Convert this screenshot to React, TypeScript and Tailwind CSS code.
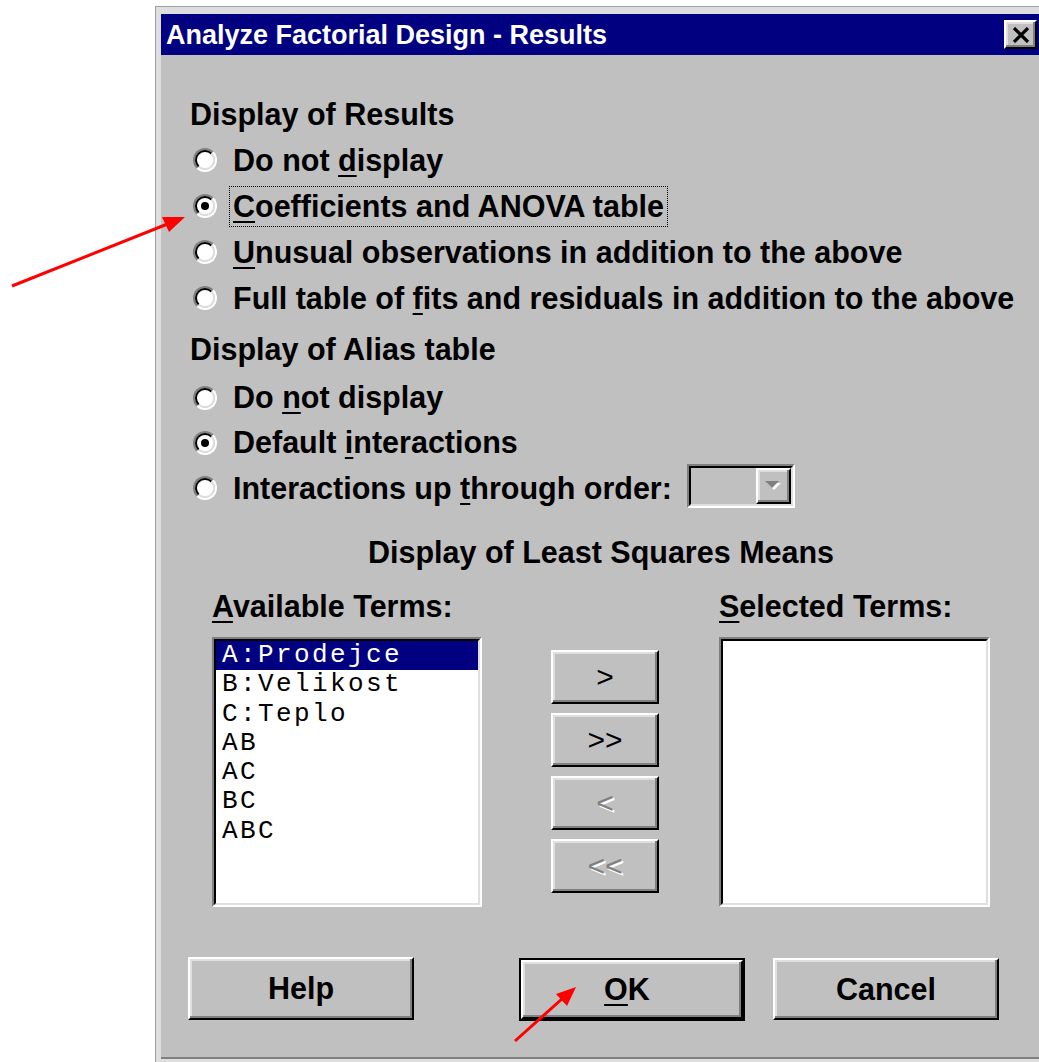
import React from 'react';

// Win95-style "Analyze Factorial Design - Results" dialog

const raised =
  'border-2 border-t-white border-l-white border-r-black border-b-black shadow-[inset_-2px_-2px_0_#808080,inset_2px_2px_0_#dfdfdf]';
const sunken =
  'border-2 border-t-[#808080] border-l-[#808080] border-r-white border-b-white';

const Key: React.FC<{ children: React.ReactNode }> = ({ children }) => (
  <span className="underline decoration-2 underline-offset-[4px]">{children}</span>
);

const Radio: React.FC<{ checked?: boolean }> = ({ checked }) => (
  <span className="flex w-[24px] h-[24px] shrink-0 rounded-full border-2 border-t-[#808080] border-l-[#808080] border-r-white border-b-white">
    <span className="flex w-full h-full items-center justify-center rounded-full border-2 border-t-black border-l-black border-r-[#dfdfdf] border-b-[#dfdfdf] bg-white">
      {checked && <span className="w-[8px] h-[8px] rounded-full bg-black" />}
    </span>
  </span>
);

const RadioRow: React.FC<{ checked?: boolean; focused?: boolean; h: string; children: React.ReactNode }> = ({
  checked,
  focused,
  h,
  children,
}) => (
  <div className={`flex items-center ${h}`}>
    <span className="ml-[3px]">
      <Radio checked={checked} />
    </span>
    {focused ? (
      <span className="ml-[12px] h-[41px] flex items-center border border-dotted border-black px-[3px]">{children}</span>
    ) : (
      <span className="ml-[16px]">{children}</span>
    )}
  </div>
);

const ArrowButton: React.FC<{ label: string; disabled?: boolean }> = ({ label, disabled }) => (
  <div
    className={`${raised} h-[54px] flex items-center justify-center font-normal text-[30px] ${
      disabled ? 'text-[#808080] [text-shadow:2px_2px_0_#ffffff]' : 'text-black'
    }`}
  >
    {label}
  </div>
);

const terms = ['A:Prodejce', 'B:Velikost', 'C:Teplo', 'AB', 'AC', 'BC', 'ABC'];

export default function App() {
  return (
    <div className="relative w-[1039px] h-[1062px] overflow-hidden bg-white font-['Liberation_Sans',Arial,sans-serif] font-bold text-black">
      <div className="ml-[155px] mt-[6px] w-[900px] h-[1056px] border-t border-l border-[#a0a0a0] bg-[#dedede] pl-[5px] pt-[7px]">
        {/* title bar */}
        <div className="w-[883px] h-[41px] bg-[#000080] flex items-center justify-between pl-[5px] pr-[7px]">
          <span className="text-white text-[27px] leading-none mt-[2px]">Analyze Factorial Design - Results</span>
          <div className={`${raised} w-[33px] h-[29px] bg-[#c0c0c0] flex items-center justify-center`}>
            <svg width="18" height="16" viewBox="0 0 18 16">
              <path d="M2 1 L16 15 M16 1 L2 15" stroke="#000" strokeWidth="3.2" />
            </svg>
          </div>
        </div>

        {/* body */}
        <div className="w-[883px] h-[1004px] bg-[#c0c0c0] pl-[29px] pt-[36px] text-[30.5px] leading-none border-b-2 border-[#808080]">
          <div className="h-[46px] flex items-center">Display of Results</div>
          <RadioRow h="h-[46px]">
            Do not <Key>d</Key>isplay
          </RadioRow>
          <RadioRow h="h-[46px]" checked focused>
            <Key>C</Key>oefficients and ANOVA table
          </RadioRow>
          <RadioRow h="h-[46px]">
            <Key>U</Key>nusual observations in addition to the above
          </RadioRow>
          <RadioRow h="h-[46px]">
            Full table of <Key>f</Key>its and residuals in addition to the above
          </RadioRow>

          <div className="mt-[5px] h-[46px] flex items-center">Display of Alias table</div>
          <div className="mt-[3px]">
            <RadioRow h="h-[45px]">
              Do <Key>n</Key>ot display
            </RadioRow>
            <RadioRow h="h-[45px]" checked>
              Default <Key>i</Key>nteractions
            </RadioRow>
            <div className="flex items-center h-[46px]">
              <span className="ml-[3px]">
                <Radio />
              </span>
              <span className="ml-[16px]">
                Interactions up <Key>t</Key>hrough order:
              </span>
              <div className={`${sunken} ml-[15px] mb-[4px] w-[108px] h-[44px]`}>
                <div className="w-full h-full border-2 border-t-black border-l-black border-r-[#dfdfdf] border-b-[#dfdfdf] flex justify-end">
                  <div className={`${raised} w-[35px] h-full bg-[#c0c0c0] flex items-center justify-center`}>
                    <svg width="18" height="12" viewBox="0 0 18 12">
                      <polygon points="3,3 17,3 10,10" fill="#ffffff" />
                      <polygon points="1,1 15,1 8,8" fill="#808080" />
                    </svg>
                  </div>
                </div>
              </div>
            </div>
          </div>

          {/* least squares means */}
          <div className="ml-[22px] w-[778px]">
            <div className="mt-[18px] h-[46px] flex items-center justify-center">Display of Least Squares Means</div>
            <div className="mt-[8px] h-[46px] flex items-center">
              <span className="w-[507px]">
                <Key>A</Key>vailable Terms:
              </span>
              <span>
                <Key>S</Key>elected Terms:
              </span>
            </div>
            <div className="mt-[8px] flex">
              <div className={`${sunken} w-[270px] h-[270px]`}>
                <div className="w-full h-full border-2 border-t-black border-l-black border-r-[#dfdfdf] border-b-[#dfdfdf] bg-white font-['Courier_New','Liberation_Mono',monospace] font-normal text-[26px] tracking-[2.4px] leading-[29.3px]">
                  {terms.map((t, i) => (
                    <div
                      key={t}
                      className={`h-[29.3px] pl-[6px] ${i === 0 ? 'bg-[#000080] text-white' : 'text-black'}`}
                    >
                      {t}
                    </div>
                  ))}
                </div>
              </div>
              <div className="ml-[69px] mt-[13px] w-[108px] flex flex-col gap-[9px]">
                <ArrowButton label=">" />
                <ArrowButton label=">>" />
                <ArrowButton label="<" disabled />
                <ArrowButton label="<<" disabled />
              </div>
              <div className={`${sunken} ml-[60px] w-[271px] h-[270px]`}>
                <div className="w-full h-full border-2 border-t-black border-l-black border-r-[#dfdfdf] border-b-[#dfdfdf] bg-white" />
              </div>
            </div>
          </div>

          {/* dialog buttons */}
          <div className="mt-[50px] ml-[-2px] flex items-start">
            <div className={`${raised} w-[226px] h-[63px] flex items-center justify-center`}>Help</div>
            <div className="ml-[105px] mt-[1px] w-[226px] h-[63px] border-2 border-black">
              <div className={`${raised} w-full h-full flex items-center justify-center`}>
                <span className="ml-[-10px]">
                  <Key>O</Key>K
                </span>
              </div>
            </div>
            <div className={`${raised} ml-[28px] mt-[1px] w-[226px] h-[62px] flex items-center justify-center`}>
              Cancel
            </div>
          </div>
        </div>
      </div>

      {/* red annotation arrows */}
      <svg className="absolute left-0 top-0 pointer-events-none" width="1039" height="1062">
        <line x1="12" y1="286" x2="170" y2="223" stroke="#ff0000" strokeWidth="3" />
        <polygon points="185,217 162,217 169,232" fill="#ff0000" />
        <line x1="515" y1="1041" x2="563" y2="998" stroke="#ff0000" strokeWidth="3" />
        <polygon points="576,987 556,994 567,1006" fill="#ff0000" />
      </svg>
    </div>
  );
}
